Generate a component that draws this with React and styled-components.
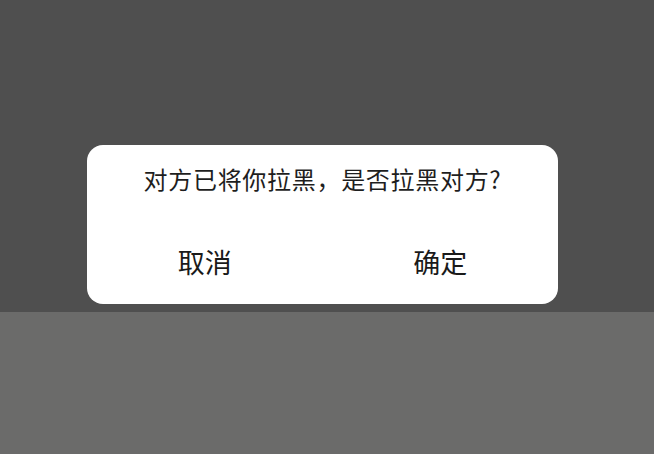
import React from 'react';
import styled, { createGlobalStyle } from 'styled-components';

const Global = createGlobalStyle`
  html, body {
    margin: 0;
    padding: 0;
    height: 100%;
    overflow: hidden;
  }
  body {
    font-family: 'Noto Sans CJK SC', 'Noto Sans', sans-serif;
    background: #6b6b6a;
  }
  #root {
    height: 100%;
  }
`;

const Page = styled.div`
  height: 100%;
  display: flex;
  flex-direction: column;
`;

const Overlay = styled.div`
  height: 312px;
  background: #4f4f4f;
  display: flex;
  justify-content: center;
  padding-top: 145px;
  box-sizing: border-box;
  padding-left: 87px;
  padding-right: 96px;
`;

const Below = styled.div`
  flex: 1;
  background: #6b6b6a;
`;

const Dialog = styled.div`
  width: 471px;
  height: 159px;
  background: #ffffff;
  border-radius: 16px;
  display: flex;
  flex-direction: column;
`;

const Message = styled.div`
  height: 79px;
  padding-top: 20px;
  box-sizing: border-box;
  text-align: center;
  font-size: 24px;
  line-height: 28px;
  color: #1e1e1e;
  letter-spacing: 0.7px;
`;

const Actions = styled.div`
  flex: 1;
  display: flex;
`;

const Action = styled.button`
  flex: 1;
  border: none;
  background: transparent;
  font-family: inherit;
  font-size: 27px;
  line-height: 32px;
  color: #1a1a1a;
  padding: 0 0 4px;
  cursor: pointer;
`;

export default function App() {
  return (
    <>
      <Global />
      <Page>
        <Overlay>
          <Dialog>
            <Message>对方已将你拉黑，是否拉黑对方?</Message>
            <Actions>
              <Action>取消</Action>
              <Action>确定</Action>
            </Actions>
          </Dialog>
        </Overlay>
        <Below />
      </Page>
    </>
  );
}
